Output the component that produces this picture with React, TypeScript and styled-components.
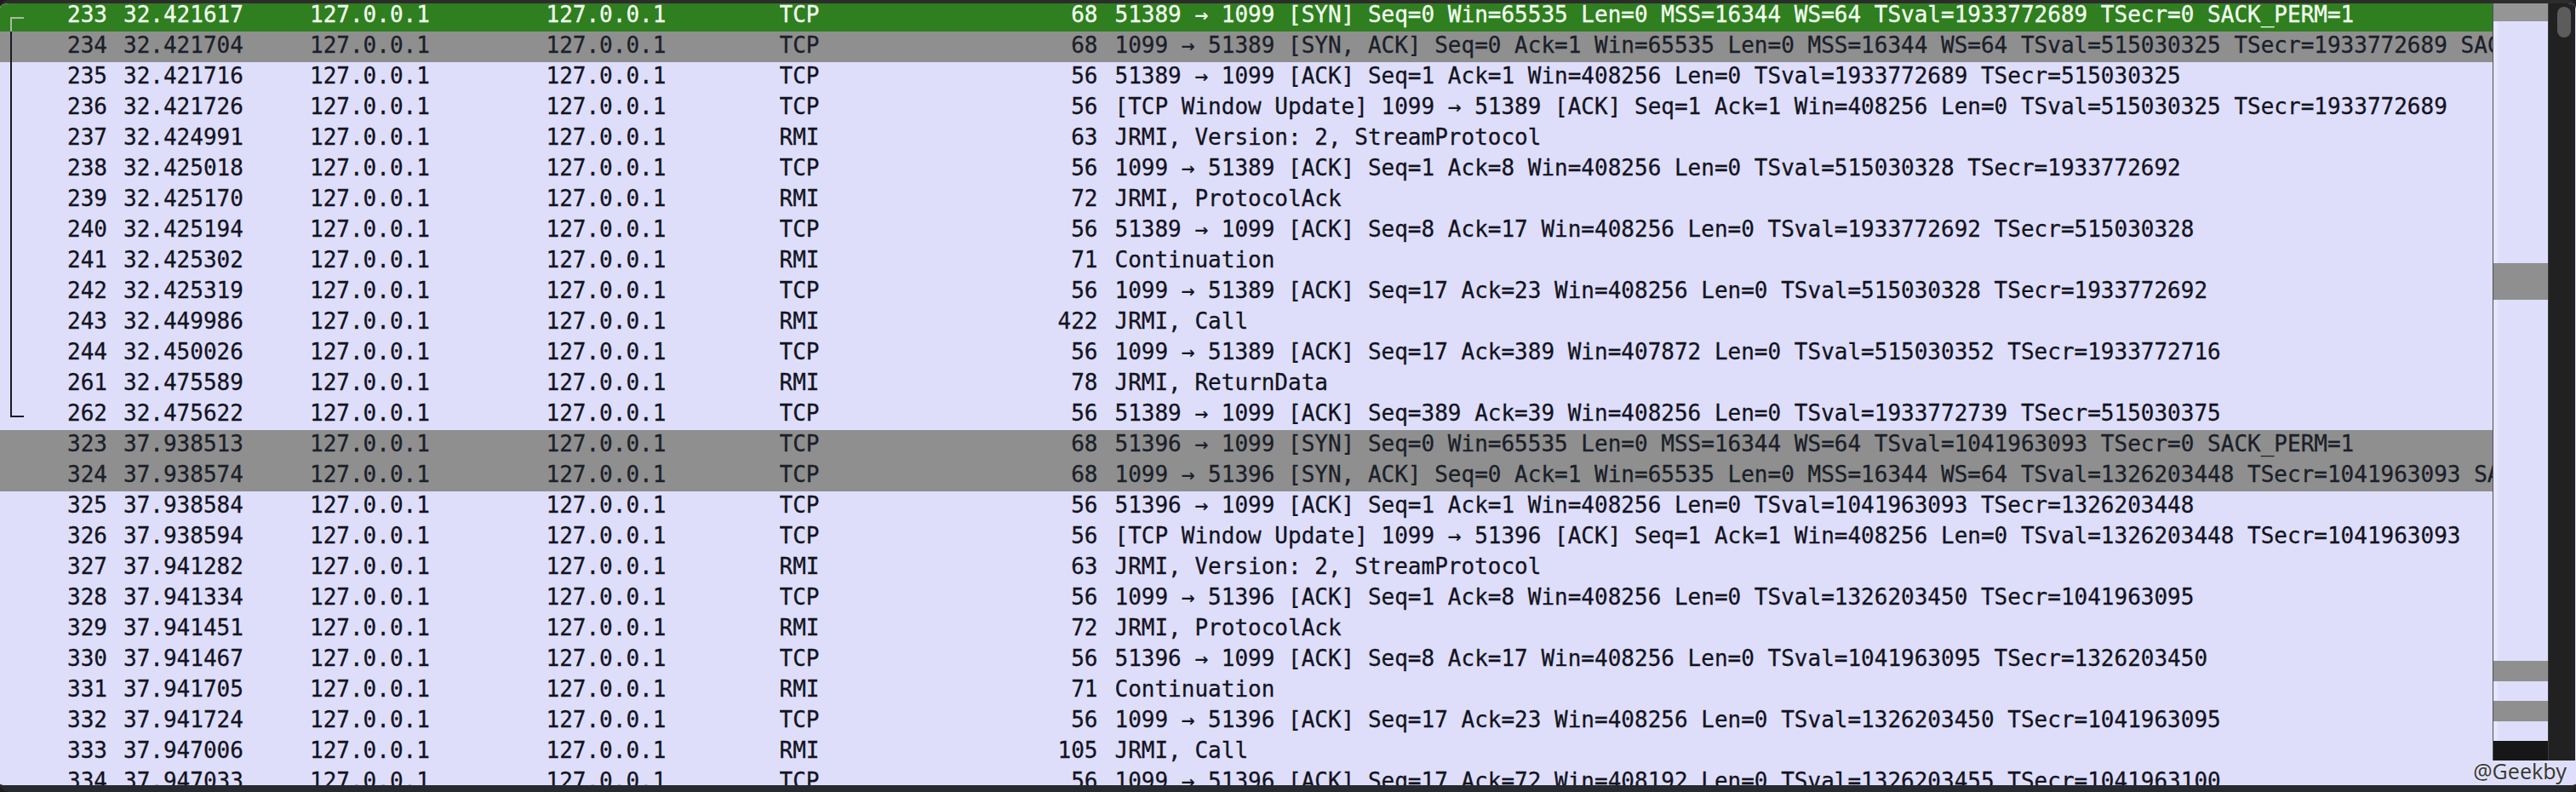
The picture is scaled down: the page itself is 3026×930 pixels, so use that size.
import React from 'react';
import styled, { createGlobalStyle } from 'styled-components';

const GlobalStyle = createGlobalStyle`
  html, body { margin: 0; padding: 0; background: #1d1d1d; }
  body { width: 3026px; height: 930px; overflow: hidden; }
`;

type Kind = 'selected' | 'syn' | 'normal';
type Tree = 'first' | 'mid' | 'last' | undefined;

interface Packet {
  no: number;
  time: string;
  proto: string;
  len: number;
  info: string;
  kind?: Kind;
  tree?: Tree;
}

const packets: Packet[] = [
  { no: 233, time: '32.421617', proto: 'TCP', len: 68, info: '51389 → 1099 [SYN] Seq=0 Win=65535 Len=0 MSS=16344 WS=64 TSval=1933772689 TSecr=0 SACK_PERM=1', kind: 'selected', tree: 'first' },
  { no: 234, time: '32.421704', proto: 'TCP', len: 68, info: '1099 → 51389 [SYN, ACK] Seq=0 Ack=1 Win=65535 Len=0 MSS=16344 WS=64 TSval=515030325 TSecr=1933772689 SACK_PERM=1', kind: 'syn', tree: 'mid' },
  { no: 235, time: '32.421716', proto: 'TCP', len: 56, info: '51389 → 1099 [ACK] Seq=1 Ack=1 Win=408256 Len=0 TSval=1933772689 TSecr=515030325', tree: 'mid' },
  { no: 236, time: '32.421726', proto: 'TCP', len: 56, info: '[TCP Window Update] 1099 → 51389 [ACK] Seq=1 Ack=1 Win=408256 Len=0 TSval=515030325 TSecr=1933772689', tree: 'mid' },
  { no: 237, time: '32.424991', proto: 'RMI', len: 63, info: 'JRMI, Version: 2, StreamProtocol', tree: 'mid' },
  { no: 238, time: '32.425018', proto: 'TCP', len: 56, info: '1099 → 51389 [ACK] Seq=1 Ack=8 Win=408256 Len=0 TSval=515030328 TSecr=1933772692', tree: 'mid' },
  { no: 239, time: '32.425170', proto: 'RMI', len: 72, info: 'JRMI, ProtocolAck', tree: 'mid' },
  { no: 240, time: '32.425194', proto: 'TCP', len: 56, info: '51389 → 1099 [ACK] Seq=8 Ack=17 Win=408256 Len=0 TSval=1933772692 TSecr=515030328', tree: 'mid' },
  { no: 241, time: '32.425302', proto: 'RMI', len: 71, info: 'Continuation', tree: 'mid' },
  { no: 242, time: '32.425319', proto: 'TCP', len: 56, info: '1099 → 51389 [ACK] Seq=17 Ack=23 Win=408256 Len=0 TSval=515030328 TSecr=1933772692', tree: 'mid' },
  { no: 243, time: '32.449986', proto: 'RMI', len: 422, info: 'JRMI, Call', tree: 'mid' },
  { no: 244, time: '32.450026', proto: 'TCP', len: 56, info: '1099 → 51389 [ACK] Seq=17 Ack=389 Win=407872 Len=0 TSval=515030352 TSecr=1933772716', tree: 'mid' },
  { no: 261, time: '32.475589', proto: 'RMI', len: 78, info: 'JRMI, ReturnData', tree: 'mid' },
  { no: 262, time: '32.475622', proto: 'TCP', len: 56, info: '51389 → 1099 [ACK] Seq=389 Ack=39 Win=408256 Len=0 TSval=1933772739 TSecr=515030375', tree: 'last' },
  { no: 323, time: '37.938513', proto: 'TCP', len: 68, info: '51396 → 1099 [SYN] Seq=0 Win=65535 Len=0 MSS=16344 WS=64 TSval=1041963093 TSecr=0 SACK_PERM=1', kind: 'syn' },
  { no: 324, time: '37.938574', proto: 'TCP', len: 68, info: '1099 → 51396 [SYN, ACK] Seq=0 Ack=1 Win=65535 Len=0 MSS=16344 WS=64 TSval=1326203448 TSecr=1041963093 SACK_PERM=1', kind: 'syn' },
  { no: 325, time: '37.938584', proto: 'TCP', len: 56, info: '51396 → 1099 [ACK] Seq=1 Ack=1 Win=408256 Len=0 TSval=1041963093 TSecr=1326203448' },
  { no: 326, time: '37.938594', proto: 'TCP', len: 56, info: '[TCP Window Update] 1099 → 51396 [ACK] Seq=1 Ack=1 Win=408256 Len=0 TSval=1326203448 TSecr=1041963093' },
  { no: 327, time: '37.941282', proto: 'RMI', len: 63, info: 'JRMI, Version: 2, StreamProtocol' },
  { no: 328, time: '37.941334', proto: 'TCP', len: 56, info: '1099 → 51396 [ACK] Seq=1 Ack=8 Win=408256 Len=0 TSval=1326203450 TSecr=1041963095' },
  { no: 329, time: '37.941451', proto: 'RMI', len: 72, info: 'JRMI, ProtocolAck' },
  { no: 330, time: '37.941467', proto: 'TCP', len: 56, info: '51396 → 1099 [ACK] Seq=8 Ack=17 Win=408256 Len=0 TSval=1041963095 TSecr=1326203450' },
  { no: 331, time: '37.941705', proto: 'RMI', len: 71, info: 'Continuation' },
  { no: 332, time: '37.941724', proto: 'TCP', len: 56, info: '1099 → 51396 [ACK] Seq=17 Ack=23 Win=408256 Len=0 TSval=1326203450 TSecr=1041963095' },
  { no: 333, time: '37.947006', proto: 'RMI', len: 105, info: 'JRMI, Call' },
  { no: 334, time: '37.947033', proto: 'TCP', len: 56, info: '1099 → 51396 [ACK] Seq=17 Ack=72 Win=408192 Len=0 TSval=1326203455 TSecr=1041963100' },
];

const Window = styled.div`
  position: relative;
  width: 3026px;
  height: 930px;
  box-sizing: border-box;
  border-top: 4px solid #2c2c2c;
  border-bottom: 8px solid #26292d;
  border-radius: 10px;
  overflow: hidden;
  display: flex;
  background: #dedefa;
`;

const PacketList = styled.div`
  flex: 1;
  min-width: 0;
  overflow: hidden;
  background: #dedefa;
`;

const ListInner = styled.div`
  margin-top: -3px;
  display: flex;
  flex-direction: column;
`;

const rowBg: Record<Kind, string> = {
  selected: '#2f7e1f',
  syn: '#8f8f8f',
  normal: '#dedefa',
};
const rowFg: Record<Kind, string> = {
  selected: '#f2fff0',
  syn: '#1b2029',
  normal: '#13131f',
};

const Row = styled.div<{ $kind: Kind }>`
  display: grid;
  grid-template-columns: 36px 90px 238px 277.5px 274px 234.5px 139.5px minmax(0, 1fr);
  height: 36px;
  flex: 0 0 36px;
  background: ${(p) => rowBg[p.$kind]};
  color: ${(p) => rowFg[p.$kind]};
  font-family: "DejaVu Sans Mono", Menlo, monospace;
  font-size: 26px;
  line-height: 32px;
  white-space: nowrap;
  -webkit-text-stroke: 0.3px currentColor;
`;

const Cell = styled.span<{ $align?: 'left' | 'right'; $pad?: number }>`
  display: block;
  overflow: hidden;
  text-align: ${(p) => p.$align ?? 'left'};
  padding-left: ${(p) => p.$pad ?? 0}px;
`;

const TreeCell = styled.span`
  display: block;
  height: 36px;
`;

const Side = styled.div`
  width: 98px;
  flex: 0 0 98px;
  display: flex;
  flex-direction: column;
`;

const SideTop = styled.div`
  flex: 1;
  display: flex;
`;

const Minimap = styled.div`
  width: 64px;
  border-left: 1px solid #4e4e5c;
  background: #dedefa;
  display: flex;
`;

const Track = styled.div`
  width: 32px;
  box-sizing: border-box;
  background: #212121;
  border-left: 1px solid #3a3a3a;
  padding: 4px 0 0 10px;
`;

const Thumb = styled.div`
  width: 16px;
  height: 36px;
  border-radius: 8px;
  background: #5c5c5c;
`;

const SideFooter = styled.div`
  height: 29px;
  background: #dedefa;
`;

const Watermark = styled.div`
  position: absolute;
  right: 11px;
  top: 886px;
  font-family: "Noto Sans", "Open Sans", sans-serif;
  font-size: 25px;
  line-height: 30px;
  color: #3a3a3a;
  text-shadow: 0 0 2px #ffffff;
`;

const TreeMark: React.FC<{ tree: Tree; light: boolean }> = ({ tree, light }) => {
  if (!tree) return null;
  const c = light ? '#a9bba4' : '#1a1a26';
  const y = 20;
  return (
    <svg width="36" height="36" viewBox="0 0 36 36">
      {tree === 'first' && (
        <>
          <line x1="13" y1={y} x2="13" y2="36" stroke={c} strokeWidth="2" />
          <line x1="12" y1={y} x2="28" y2={y} stroke={c} strokeWidth="2" />
        </>
      )}
      {tree === 'mid' && <line x1="13" y1="0" x2="13" y2="36" stroke={c} strokeWidth="2" />}
      {tree === 'last' && (
        <>
          <line x1="13" y1="0" x2="13" y2={y} stroke={c} strokeWidth="2" />
          <line x1="12" y1={y} x2="28" y2={y} stroke={c} strokeWidth="2" />
        </>
      )}
    </svg>
  );
};

const MinimapChart: React.FC = () => (
  <svg width="64" height="889" viewBox="0 0 64 889">
    <rect x="0" y="0" width="64" height="889" fill="#dedefa" />
    <rect x="0" y="0" width="5" height="889" fill="#e6e6fc" />
    <rect x="0" y="0" width="64" height="21" fill="#959595" />
    <rect x="0" y="305" width="64" height="43" fill="#8f8f8f" />
    <rect x="0" y="772" width="64" height="24" fill="#8f8f8f" />
    <rect x="0" y="819" width="64" height="24" fill="#8f8f8f" />
    <rect x="0" y="866" width="64" height="23" fill="#171717" />
  </svg>
);

export default function App() {
  return (
    <>
      <GlobalStyle />
      <Window>
        <PacketList>
          <ListInner>
            {packets.map((p) => {
              const kind = p.kind ?? 'normal';
              return (
                <Row key={p.no} $kind={kind}>
                  <TreeCell>
                    <TreeMark tree={p.tree} light={kind === 'selected'} />
                  </TreeCell>
                  <Cell $align="right">{p.no}</Cell>
                  <Cell $pad={19}>{p.time}</Cell>
                  <Cell>127.0.0.1</Cell>
                  <Cell>127.0.0.1</Cell>
                  <Cell>{p.proto}</Cell>
                  <Cell $align="right">{p.len}</Cell>
                  <Cell $pad={20}>{p.info}</Cell>
                </Row>
              );
            })}
          </ListInner>
        </PacketList>
        <Side>
          <SideTop>
            <Minimap>
              <MinimapChart />
            </Minimap>
            <Track>
              <Thumb />
            </Track>
          </SideTop>
          <SideFooter />
        </Side>
        <Watermark>@Geekby</Watermark>
      </Window>
    </>
  );
}
